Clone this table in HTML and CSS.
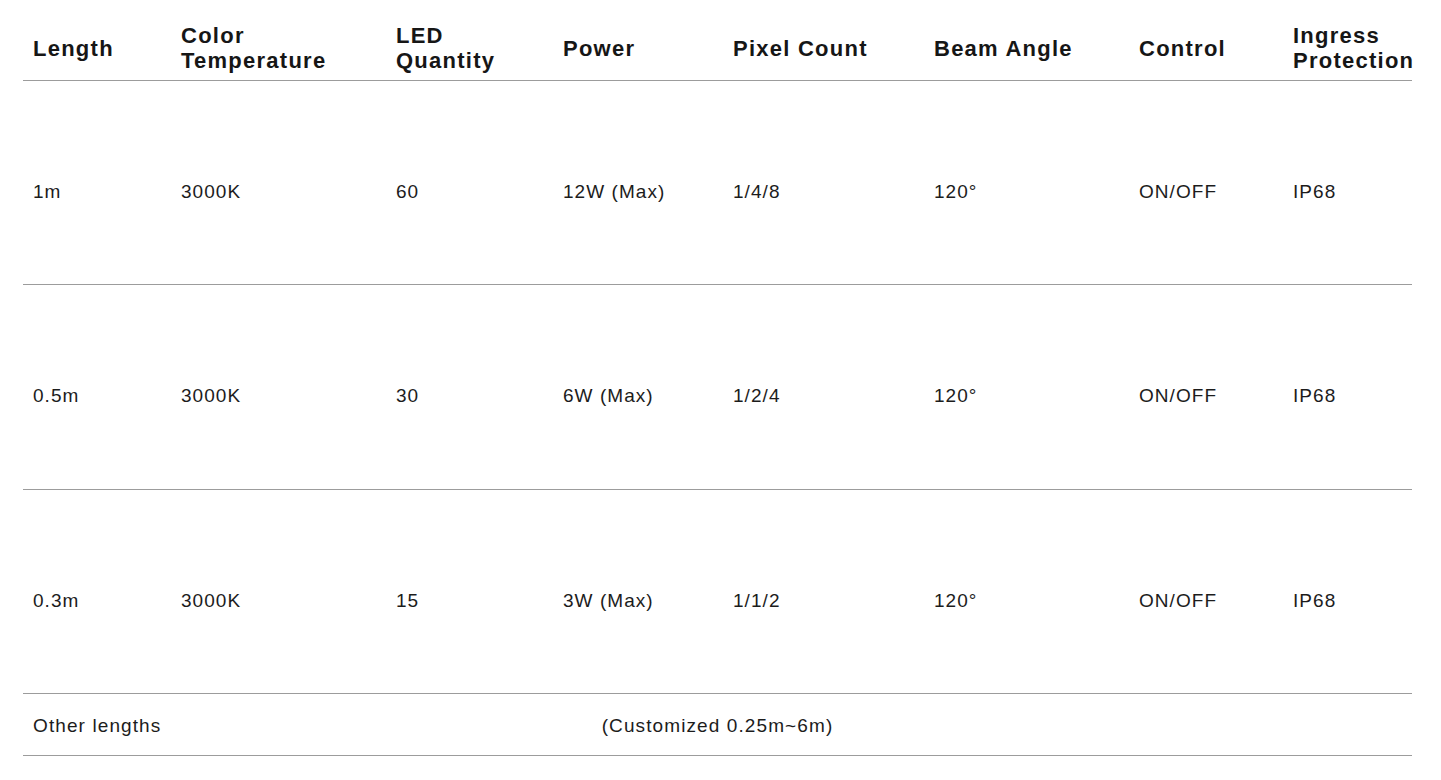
FILE: index.html
```html
<!DOCTYPE html>
<html lang="en">
<head>
<meta charset="utf-8">
<title>Specifications</title>
<link rel="stylesheet" href="styles.css">
</head>
<body>
<div class="spec">
  <div class="row head">
    <div class="cell">Length</div>
    <div class="cell">Color<br>Temperature</div>
    <div class="cell">LED<br>Quantity</div>
    <div class="cell">Power</div>
    <div class="cell">Pixel Count</div>
    <div class="cell">Beam Angle</div>
    <div class="cell">Control</div>
    <div class="cell">Ingress<br>Protection</div>
  </div>
  <div class="row body">
    <div class="cell">1m</div>
    <div class="cell">3000K</div>
    <div class="cell">60</div>
    <div class="cell">12W (Max)</div>
    <div class="cell">1/4/8</div>
    <div class="cell">120°</div>
    <div class="cell">ON/OFF</div>
    <div class="cell">IP68</div>
  </div>
  <div class="row body">
    <div class="cell">0.5m</div>
    <div class="cell">3000K</div>
    <div class="cell">30</div>
    <div class="cell">6W (Max)</div>
    <div class="cell">1/2/4</div>
    <div class="cell">120°</div>
    <div class="cell">ON/OFF</div>
    <div class="cell">IP68</div>
  </div>
  <div class="row body">
    <div class="cell">0.3m</div>
    <div class="cell">3000K</div>
    <div class="cell">15</div>
    <div class="cell">3W (Max)</div>
    <div class="cell">1/1/2</div>
    <div class="cell">120°</div>
    <div class="cell">ON/OFF</div>
    <div class="cell">IP68</div>
  </div>
  <div class="row foot">
    <div class="cell first">Other lengths</div>
    <div class="cell wide">(Customized 0.25m~6m)</div>
  </div>
</div>
</body>
</html>
```

FILE: styles.css
```css
html, body {
  margin: 0;
  padding: 0;
  background: #ffffff;
}

body {
  font-family: "Liberation Sans", Arial, sans-serif;
  color: #1c1c1c;
}

.spec {
  margin-left: 23px;
  width: 1389px;
}

.row {
  display: grid;
  grid-template-columns: 148px 215px 167px 170px 201px 205px 154px 129px;
  border-bottom: 1px solid #9c9c9c;
  box-sizing: border-box;
}

.cell {
  padding-left: 10px;
  white-space: nowrap;
}

.head {
  height: 81px;
  padding-top: 16px;
  align-items: center;
}

.head .cell {
  font-size: 22px;
  font-weight: 700;
  line-height: 25px;
  letter-spacing: 1.25px;
  color: #161616;
}

.body {
  height: 204.4px;
  align-items: start;
}

.body .cell {
  padding-top: 100px;
  font-size: 19px;
  line-height: 22px;
  letter-spacing: 1.05px;
}

.foot {
  height: 62px;
  align-items: start;
}

.foot .cell {
  padding-top: 21px;
  font-size: 19px;
  line-height: 22px;
  letter-spacing: 1.1px;
  grid-row: 1;
}

.foot .first {
  grid-column: 1;
}

.foot .wide {
  grid-column: 1 / -1;
  padding-left: 0;
  text-align: center;
}
```
